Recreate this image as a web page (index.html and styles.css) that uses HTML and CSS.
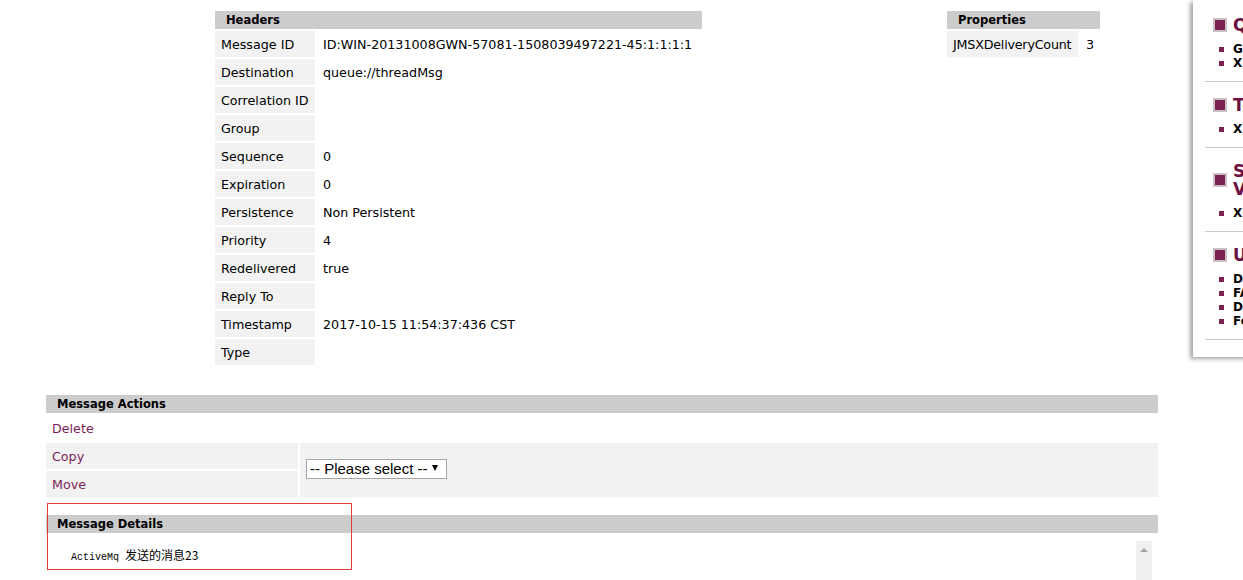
FILE: index.html
```html
<!DOCTYPE html>
<html>
<head>
<meta charset="utf-8">
<title>Browse threadMsg</title>
<link rel="stylesheet" href="styles.css">
</head>
<body>
<div class="page">
  <main class="main">
    <div class="top">
      <table class="tbl headers">
        <tr><th colspan="2">Headers</th></tr>
        <tr><td class="label">Message ID</td><td>ID:WIN-20131008GWN-57081-1508039497221-45:1:1:1:1</td></tr>
        <tr><td class="label">Destination</td><td>queue://threadMsg</td></tr>
        <tr><td class="label">Correlation ID</td><td></td></tr>
        <tr><td class="label">Group</td><td></td></tr>
        <tr><td class="label">Sequence</td><td>0</td></tr>
        <tr><td class="label">Expiration</td><td>0</td></tr>
        <tr><td class="label">Persistence</td><td>Non Persistent</td></tr>
        <tr><td class="label">Priority</td><td>4</td></tr>
        <tr><td class="label">Redelivered</td><td>true</td></tr>
        <tr><td class="label">Reply To</td><td></td></tr>
        <tr><td class="label">Timestamp</td><td>2017-10-15 11:54:37:436 CST</td></tr>
        <tr><td class="label">Type</td><td></td></tr>
      </table>
      <table class="tbl props">
        <tr><th colspan="2">Properties</th></tr>
        <tr><td class="label">JMSXDeliveryCount</td><td class="pval">3</td></tr>
      </table>
    </div>

    <table class="tbl actions">
      <tr><th colspan="2">Message Actions</th></tr>
      <tr><td class="act"><a href="#">Delete</a></td><td></td></tr>
      <tr>
        <td class="label act"><a href="#">Copy</a></td>
        <td class="label selcell" rowspan="2">
          <span class="selwrap"><select class="sel"><option>-- Please select --</option></select></span>
        </td>
      </tr>
      <tr><td class="label act"><a href="#">Move</a></td></tr>
    </table>

    <table class="tbl details">
      <tr><th>Message Details</th></tr>
      <tr>
        <td class="detail-cell">
          <div class="msgbox">
            <div class="msgtext"><span class="mono">ActiveMq </span><span class="cjk">发送的消息23</span></div>
            <div class="vscroll"><span class="up"></span></div>
          </div>
        </td>
      </tr>
    </table>
  </main>

  <aside class="sidebar">
    <section class="sb-section">
      <h2 class="sb-title"><span class="sb-icon"></span><span class="sb-text">Queue Views</span></h2>
      <ul class="sb-list"><li>Graph</li><li>XML</li></ul>
    </section>
    <section class="sb-section">
      <h2 class="sb-title"><span class="sb-icon"></span><span class="sb-text">Topic Views</span></h2>
      <ul class="sb-list"><li>XML</li></ul>
    </section>
    <section class="sb-section">
      <h2 class="sb-title"><span class="sb-icon"></span><span class="sb-text">Subscribers Views</span></h2>
      <ul class="sb-list"><li>XML</li></ul>
    </section>
    <section class="sb-section">
      <h2 class="sb-title"><span class="sb-icon"></span><span class="sb-text">Useful Links</span></h2>
      <ul class="sb-list"><li>Documentation</li><li>FAQ</li><li>Downloads</li><li>Forums</li></ul>
    </section>
  </aside>
</div>
<div class="highlight"></div>
</body>
</html>
```
FILE: styles.css
```css
html, body {
  margin: 0;
  padding: 0;
  background: #ffffff;
}
body {
  font-family: "DejaVu Sans", Verdana, sans-serif;
  font-size: 12.7px;
  color: #000;
  overflow: hidden;
  width: 1243px;
  height: 580px;
  position: relative;
}
.page {
  display: flex;
  align-items: flex-start;
}
.main {
  flex: 0 0 1116px;
  padding-left: 44px;
}
.top {
  display: flex;
  align-items: flex-start;
  padding-top: 9px;
  padding-left: 169px;
}
.tbl {
  border-collapse: separate;
  border-spacing: 2px;
}
.tbl th {
  height: 18px;
  padding: 0 0 0 11px;
  background: #cccccc;
  text-align: left;
  font-weight: bold;
  font-size: 11.5px;
  line-height: 18px;
  vertical-align: middle;
}
.tbl td {
  height: 26px;
  padding: 0 6px;
  vertical-align: middle;
  white-space: nowrap;
  line-height: 15px;
}
.tbl td.label {
  background: #f2f2f2;
}
.headers {
  width: 491px;
}
.headers td.label {
  width: 88px;
}
.props {
  width: 157px;
  margin-left: 241px;
}
.props td.label {
  width: 119px;
  letter-spacing: -0.2px;
}
.props td.pval {
  width: 8px;
}
.actions {
  width: 1116px;
  margin-top: 26px;
}
.actions td.act {
  width: 240px;
}
.actions a {
  color: #7a1d58;
  text-decoration: none;
}
.selwrap {
  position: relative;
  display: inline-block;
  vertical-align: middle;
}
.sel {
  appearance: none;
  -webkit-appearance: none;
  width: 141px;
  height: 20px;
  margin: 0 0 2px 0;
  padding: 0 0 0 3px;
  border: 1px solid #a6a6a6;
  border-radius: 0;
  background: #ffffff;
  font-family: "Liberation Sans", Arial, sans-serif;
  font-size: 15px;
  line-height: 18px;
  color: #000;
}
.selwrap::after {
  content: "";
  position: absolute;
  left: 126px;
  top: 6px;
  border-left: 3.5px solid transparent;
  border-right: 3.5px solid transparent;
  border-top: 6px solid #000;
}
.details {
  width: 1116px;
  margin-top: 14px;
}
.details td.detail-cell {
  padding: 6px 6px 0 6px;
  height: auto;
}
.msgbox {
  display: flex;
  height: 80px;
}
.msgtext {
  flex: 1;
  padding: 6px 0 0 19px;
  line-height: 16px;
}
.mono {
  font-family: "Liberation Mono", "DejaVu Sans Mono", monospace;
  font-size: 10px;
  white-space: pre;
}
.cjk {
  font-family: "Noto Sans CJK SC", sans-serif;
  font-size: 12px;
}
.vscroll {
  flex: 0 0 16px;
  background: #f0f0f0;
  display: flex;
  justify-content: center;
  padding-top: 7px;
  box-sizing: border-box;
}
.up {
  width: 0;
  height: 0;
  border-left: 4px solid transparent;
  border-right: 4px solid transparent;
  border-bottom: 4px solid #a3a3a3;
}

/* sidebar */
.sidebar {
  flex: 0 0 auto;
  width: 230px;
  margin-left: 33px;
  padding: 0 0 17px 12px;
  background: #ffffff;
  box-shadow: -3px 2px 4px rgba(0, 0, 0, 0.35);
}
.sb-section {
  border-bottom: 1px solid #cccccc;
  padding: 14px 0 11px 8px;
}
.sb-section:first-child {
  padding-top: 16px;
}
.sb-title {
  display: flex;
  align-items: center;
  margin: 0;
  font-family: "DejaVu Sans", Verdana, sans-serif;
  font-size: 17px;
  line-height: 18px;
  font-weight: bold;
  color: #6b1040;
}
.sb-icon {
  flex: 0 0 auto;
  width: 10px;
  height: 10px;
  background: #7c2352;
  border: 2px solid #c8c0c4;
  margin-right: 6px;
}
.sb-text {
  width: 150px;
}
.sb-list {
  list-style: none;
  margin: 8px 0 0 0;
  padding: 0 0 0 6px;
}
.sb-list li {
  display: flex;
  align-items: center;
  font-weight: bold;
  font-size: 12px;
  line-height: 14px;
  color: #000;
}
.sb-list li::before {
  content: "";
  width: 5px;
  height: 5px;
  background: #7c2352;
  margin-right: 9px;
}

.highlight {
  position: absolute;
  left: 47px;
  top: 503px;
  width: 303px;
  height: 65px;
  border: 1px solid #e23c3c;
}
```
